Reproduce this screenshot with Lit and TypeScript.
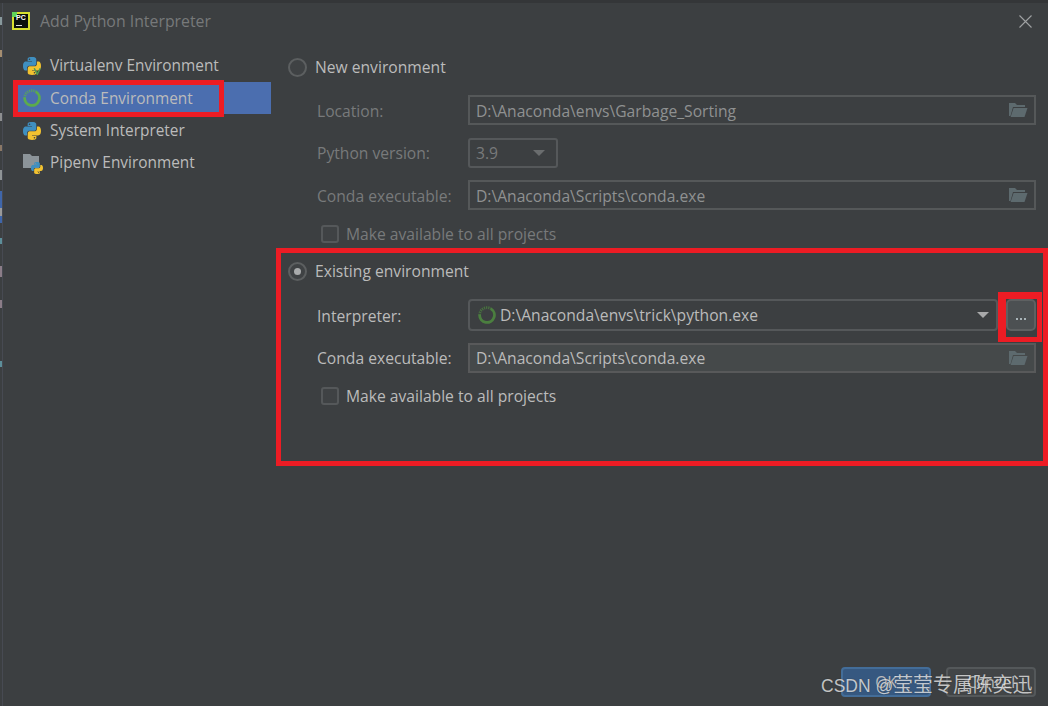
import { LitElement, html, css, svg } from "lit";
import { customElement } from "lit/decorators.js";

const blue = "M11.9 0C5.8 0 6.2 2.6 6.2 2.6v2.7h5.8v.8H3.9S0 5.7 0 11.9s3.4 6 3.4 6h2v-2.9s-.1-3.4 3.4-3.4h5.7s3.2.1 3.2-3.1V3.2S18.3 0 11.9 0zM8.7 1.9a1 1 0 1 1 0 2.1 1 1 0 0 1 0-2.1z";
const python = (cls: string, badge = "") => html`<svg class=${cls} viewBox="0 0 24 24">
  <path d=${blue} fill="#3f8fc0"></path>
  <path d=${blue} fill="#f2c230" transform="rotate(180 12 12)"></path>
  ${badge === "v" ? svg`<path d="M15 15l4 8 4-8" fill="none" stroke="#4f9a4f" stroke-width="2"></path>` : ""}
</svg>`;

const spinner = (cls: string, colour: string) => html`<svg class=${cls} viewBox="0 0 18 18">
  <path d="M12.700 2.600A7.400 7.400 0 1 1 1.600 9" fill="none" stroke=${colour} stroke-width="2.800"></path>
  <path d="M1.600 9A7.400 7.400 0 0 1 12.700 2.600" fill="none" stroke=${colour} stroke-width="2.800" stroke-dasharray="1.200 .9" opacity=".8"></path>
</svg>`;

const folder = html`<svg class="folder" viewBox="0 0 20 16">
  <path d="M1 14V1h6l2 2h8v2H5L2.5 14z" fill="#5d6a6e"></path>
  <path d="M5.6 6H19.500L16.500 15H2.600z" fill="#5d6a6e"></path>
</svg>`;

@customElement("app-root")
export class AppRoot extends LitElement {
  static styles = css`
    :host {
      display: flex;
      flex-direction: column;
      position: relative;
      width: 1048px;
      height: 706px;
      overflow: hidden;
      background: #3c3f41;
      color: #bbbbbb;
      font-family: "Open Sans", "Noto Sans", sans-serif;
      font-size: 15.65px;
      border-top: 3px solid #343638;
      box-sizing: border-box;
    }
    .rail { position: absolute; left: 0; top: 0; width: 2px; height: 100%; border-right: 1px solid #474a52; }
    .bit { position: absolute; left: 0; width: 2px; }
    .titlebar { display: flex; align-items: center; height: 36px; padding-left: 12px; flex: none; }
    .logo {
      width: 18px; height: 18px; box-sizing: border-box; border: 2px solid #d8df2e;
      background: #0b0f0c; position: relative; color: #fff; font: 700 7px/8px "Liberation Sans", sans-serif;
      padding-left: 2px;
    }
    .logo::before { content: ""; position: absolute; left: -2px; top: -2px; width: 5px; height: 5px; background: #5fd35a; }
    .logo span { position: relative; }
    .logo i { position: absolute; left: 2px; bottom: 2px; width: 6px; height: 1.500px; background: #ddd; }
    .title { margin-left: 10px; color: #77797a; font-size: 15.85px; }
    .close { margin-left: auto; margin-right: 16px; width: 13px; height: 13px; }
    .body { display: flex; flex: 1; min-height: 0; }
    .side { width: 271px; flex: none; box-sizing: border-box; padding: 10.600px 0 0 15px; font-size: 15.4px; }
    .item { display: flex; align-items: center; height: 32.400px; padding-left: 8px; gap: 9px; }
    .item.sel { background: #4b6eaf; }
    .ico { width: 18px; height: 18px; flex: none; }
    .pipenv { position: relative; width: 18px; height: 18px; flex: none; }
    .pipenv .dir { position: absolute; left: 0; top: 0; width: 16px; height: 14px; }
    .pipenv .py { position: absolute; right: -2px; bottom: -2px; width: 12px; height: 12px; }
    .main { flex: 1; padding: 11px 12px 0 17px; }
    .radio-row { display: flex; align-items: center; height: 34px; gap: 8px; }
    .radio { width: 19px; height: 19px; box-sizing: border-box; border-radius: 50%; border: 2px solid #5c5f60; background: #3f4244; display: grid; place-items: center; flex: none; }
    .radio i { width: 7px; height: 7px; border-radius: 50%; background: #a9abac; }
    .form { padding-left: 29px; }
    .row { display: grid; grid-template-columns: 151px 1fr; align-items: center; height: 30px; }
    .row.first { margin-top: 11px; }
    .row.gap13 { margin-top: 13px; }
    .row.gap12 { margin-top: 12px; }
    .row.tall { height: 32px; margin-top: 11px; }
    .dis { color: #787a7b; }
    .nudge { padding-top: 1px; }
    .field { display: flex; align-items: center; height: 30px; box-sizing: border-box; padding: 0 6px 0 6px; border: 2px solid #555859; color: #8f9191; }
    .field.on { background: #45494a; border-color: #58595a; color: #bbbbbb; }
    .folder { width: 20px; height: 16px; margin-left: auto; flex: none; }
    .select { width: 90px; height: 30px; box-sizing: border-box; border: 2px solid #55585a; border-radius: 3px; display: flex; align-items: center; padding: 0 6px; color: #787a7b; }
    .tri { margin-left: auto; margin-right: 5px; width: 0; height: 0; border-left: 6px solid transparent; border-right: 6px solid transparent; border-top: 6px solid #6a6d6e; }
    .interp { display: flex; gap: 8px; }
    .combo { flex: 1; height: 32px; box-sizing: border-box; border: 2px solid #55585a; border-radius: 4px; display: flex; align-items: center; padding: 0 7px 0 8px; gap: 4px; }
    .combo .tri { margin: 0; margin-left: auto; border-top-color: #a8a9aa; }
    .spin2 { width: 18px; height: 18px; flex: none; }
    .more { width: 30px; height: 32px; box-sizing: border-box; border: 2px solid #5e6162; border-radius: 5px; background: #4c5052; display: flex; align-items: flex-end; justify-content: center; gap: 2px; padding-bottom: 9px; }
    .more i { width: 2px; height: 2px; background: #a9b4b8; }
    .check-row { display: flex; align-items: center; gap: 7px; padding-left: 4px; height: 18px; }
    .check-row.a { margin-top: 15px; }
    .check-row.b { margin-top: 14px; }
    .box { width: 18px; height: 18px; box-sizing: border-box; border: 2px solid #55585a; border-radius: 3px; background: #3f4244; flex: none; }
    .sec { margin-top: 11px; }
    .footer { display: flex; justify-content: flex-end; gap: 15px; padding: 0 12px 9px 0; flex: none; }
    .btn { width: 90px; height: 30px; box-sizing: border-box; border-radius: 4px; display: grid; place-items: center; border: 2px solid #54585a; background: #424547; }
    .btn.ok { background: #365880; border-color: #436d99; }
    .mark {
      position: absolute; left: 821px; top: 669px; color: #e8e8e8; white-space: nowrap; opacity: .78;
      font: 17.500px/26px "Liberation Sans", "Noto Sans CJK SC", sans-serif;
      text-shadow: 0 0 1px #222;
    }
    .mark span { font-size: 19.900px; }
    .red { position: absolute; box-sizing: border-box; border: 5px solid #ed1c24; pointer-events: none; }
    .r1 { left: 13px; top: 77px; width: 211px; height: 37px; }
    .r2 { left: 276px; top: 245px; width: 772px; height: 218px; }
    .r3 { left: 998px; top: 289px; width: 44px; height: 50px; border-width: 7px 5px 5px 8px; }
  `;

  render() {
    return html`
      <div class="rail">
        ${[[14, 8, "#88999c"], [47, 7, "#a58e70"], [110, 8, "#8d8f90"], [142, 6, "#8b7866"], [167, 10, "#8f9496"], [188, 32, "#3f66aa"], [205, 8, "#9a9a9a"], [235, 6, "#5d8f9a"], [263, 11, "#8b7d88"], [297, 8, "#8b7d88"], [358, 6, "#5d8f9a"]].map(
          ([y, h, c]) => html`<span class="bit" style="top:${y}px;height:${h}px;background:${c}"></span>`
        )}
      </div>
      <div class="titlebar">
        <div class="logo"><span>PC</span><i></i></div>
        <span class="title">Add Python Interpreter</span>
        <svg class="close" viewBox="0 0 13 13"><path d="M.5.500l12 12M12.500.500l-12 12" stroke="#a0a2a3" stroke-width="1.100" fill="none"></path></svg>
      </div>
      <div class="body">
        <div class="side">
          <div class="item">${python("ico", "v")}<span>Virtualenv Environment</span></div>
          <div class="item sel">${spinner("ico", "#5cab4d")}<span>Conda Environment</span></div>
          <div class="item">${python("ico")}<span>System Interpreter</span></div>
          <div class="item">
            <span class="pipenv">
              <svg class="dir" viewBox="0 0 16 14"><path d="M0 0h7l2 2h7v12H0z" fill="#8c9499"></path></svg>
              ${python("py")}
            </span>
            <span>Pipenv Environment</span>
          </div>
        </div>
        <div class="main">
          <div class="radio-row"><span class="radio"></span><span>New environment</span></div>
          <div class="form">
            <div class="row first"><span class="dis nudge">Location:</span><div class="field"><span class="nudge">D:\\Anaconda\\envs\\Garbage_Sorting</span>${folder}</div></div>
            <div class="row gap13"><span class="dis">Python version:</span><div class="select"><span>3.9</span><span class="tri"></span></div></div>
            <div class="row gap12"><span class="dis nudge">Conda executable:</span><div class="field"><span class="nudge">D:\\Anaconda\\Scripts\\conda.exe</span>${folder}</div></div>
            <div class="check-row a"><span class="box"></span><span class="dis">Make available to all projects</span></div>
          </div>
          <div class="radio-row sec"><span class="radio"><i></i></span><span>Existing environment</span></div>
          <div class="form">
            <div class="row tall"><span class="nudge">Interpreter:</span>
              <div class="interp">
                <div class="combo">${spinner("spin2", "#4b7f3f")}<span>D:\\Anaconda\\envs\\trick\\python.exe</span><span class="tri"></span></div>
                <div class="more"><i></i><i></i><i></i></div>
              </div>
            </div>
            <div class="row gap12"><span>Conda executable:</span><div class="field on"><span>D:\\Anaconda\\Scripts\\conda.exe</span>${folder}</div></div>
            <div class="check-row b"><span class="box"></span><span>Make available to all projects</span></div>
          </div>
        </div>
      </div>
      <div class="footer">
        <div class="btn ok">OK</div>
        <div class="btn">Cancel</div>
      </div>
      <div class="red r1"></div>
      <div class="red r2"></div>
      <div class="red r3"></div>
      <div class="mark">CSDN @<span>莹莹专属陈奕迅</span></div>
    `;
  }
}
